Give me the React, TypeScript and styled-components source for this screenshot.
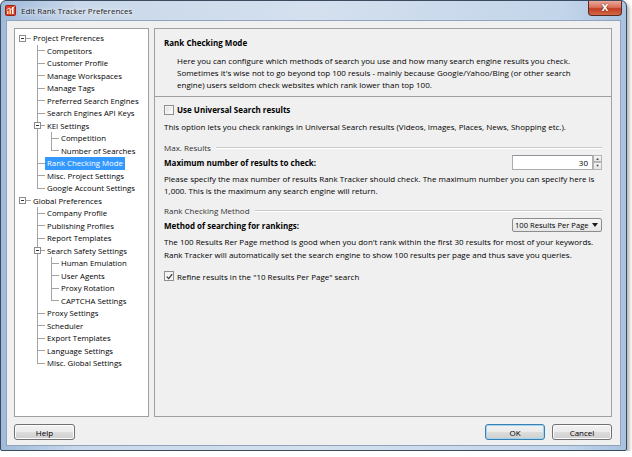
import React from "react";
import styled, { createGlobalStyle } from "styled-components";

const GlobalStyle = createGlobalStyle`
  html, body {
    margin: 0;
    padding: 0;
    background: #ffffff;
  }
  body {
    font-family: "Open Sans", "Noto Sans", sans-serif;
    font-size: 8px;
    color: #000;
  }
  * {
    box-sizing: border-box;
  }
`;

const LINE = "#a3a3a3";

const Window = styled.div`
  width: 627px;
  height: 451px;
  display: flex;
  flex-direction: column;
  border: 1px solid #3b4b5f;
  border-radius: 6px 6px 2px 2px;
  background: linear-gradient(90deg, #9fbadb 0%, #c9d8ea 12%, #d4e0ee 50%, #c3d5ea 90%, #a9c2e0 100%);
  box-shadow: 2px 3px 4px rgb(0 0 0 / 0.35);
  overflow: hidden;
`;

const TitleBar = styled.div`
  height: 19px;
  display: flex;
  align-items: center;
  padding: 0 4px 0 4px;
  gap: 5px;
`;

const TitleText = styled.span`
  font-size: 8px;
  color: #1a1a1a;
  text-shadow: 0 0 6px #ffffff, 0 0 3px #ffffff;
  flex: 1;
`;

const CloseButton = styled.div`
  width: 34px;
  height: 15px;
  margin-top: -4px;
  border: 1px solid #5a2a22;
  border-top: none;
  border-radius: 0 0 4px 4px;
  background: linear-gradient(#e9a89a 0%, #d9715c 45%, #c13d24 55%, #d56a45 100%);
  display: flex;
  align-items: center;
  justify-content: center;
  color: #ffffff;
  font-family: "DejaVu Sans", sans-serif;
  font-weight: bold;
  font-size: 9px;
  text-shadow: 0 0 2px #5a1a10;
`;

const Client = styled.div`
  flex: 1;
  margin: 0 5px 4px 5px;
  border: 1px solid #8fa3bb;
  background: #f0f0f0;
  padding: 7px 8px 5px 7px;
  display: flex;
  flex-direction: column;
  gap: 7px;
`;

const Main = styled.div`
  flex: 1;
  display: flex;
  gap: 5px;
  min-height: 0;
`;

const TreeBox = styled.div`
  width: 135px;
  flex-shrink: 0;
  background: #ffffff;
  border: 1px solid #a0a0a0;
  padding-top: 3px;
  overflow: hidden;
  font-size: 7.8px;
`;

const Row = styled.div`
  height: 12.5px;
  display: flex;
  align-items: stretch;
  white-space: nowrap;
`;

const HandleCell = styled.div<{ $line: boolean }>`
  width: 16px;
  flex-shrink: 0;
  display: flex;
  align-items: center;
  padding-left: 4px;
  background: ${(p) =>
    p.$line ? `linear-gradient(${LINE}, ${LINE}) no-repeat 8px 50% / 8px 1px` : "none"};
`;

const Guide = styled.div<{ $kind: "pipe" | "tee" | "ell" | "none" }>`
  width: 14px;
  flex-shrink: 0;
  display: flex;
  align-items: center;
  padding-left: 3px;
  background: ${({ $kind }) => {
    const g = `linear-gradient(${LINE}, ${LINE}) no-repeat`;
    if ($kind === "pipe") return `${g} 6px 0 / 1px 100%`;
    if ($kind === "tee") return `${g} 6px 0 / 1px 100%, ${g} 6px 50% / 8px 1px`;
    if ($kind === "ell") return `${g} 6px 0 / 1px 50%, ${g} 6px 50% / 8px 1px`;
    return "none";
  }};
`;

const Expander = styled.span`
  width: 7px;
  height: 7px;
  flex-shrink: 0;
  border: 1px solid #8c8c8c;
  background: #ffffff linear-gradient(#333, #333) no-repeat 50% 50% / 3px 1px;
`;

const NodeLabel = styled.span<{ $selected?: boolean }>`
  padding: 0 2px;
  line-height: 12.5px;
  background: ${(p) => (p.$selected ? "#3399ff" : "transparent")};
  color: ${(p) => (p.$selected ? "#ffffff" : "#000000")};
`;

const Panel = styled.div`
  flex: 1;
  min-width: 0;
  border: 1px solid #a0a0a0;
  background: #f0f0f0;
  display: flex;
  flex-direction: column;
  overflow: hidden;
`;

const Header = styled.div`
  padding: 8px 9px 5px 9px;
  border-bottom: 1px solid #a0a0a0;
`;

const HeaderTitle = styled.div`
  font-weight: bold;
  line-height: 12.5px;
`;

const HeaderText = styled.div`
  margin: 5px 0 0 13px;
  line-height: 12px;
  white-space: nowrap;
`;

const Body = styled.div`
  padding: 7px 9px 0 9px;
  display: flex;
  flex-direction: column;
`;

const CheckRow = styled.label<{ $top?: number }>`
  display: flex;
  align-items: center;
  gap: 3px;
  height: 12px;
  margin-top: ${(p) => p.$top ?? 0}px;
  white-space: nowrap;
`;

const CheckBox = styled.span<{ $checked?: boolean }>`
  width: 10px;
  height: 10px;
  flex-shrink: 0;
  border: 1px solid #8e8f8f;
  background: ${(p) =>
    p.$checked
      ? "#f4f4f4"
      : "linear-gradient(135deg, #dcdcdc 0%, #f6f6f6 70%, #ffffff 100%)"};
  box-shadow: inset 0 0 0 1px #f4f4f4;
  display: flex;
  align-items: center;
  justify-content: center;
`;

const BoldLabel = styled.span`
  font-weight: bold;
  white-space: nowrap;
`;

const Note = styled.div<{ $top: number }>`
  margin-top: ${(p) => p.$top}px;
  line-height: 12.5px;
  white-space: nowrap;
`;

const GroupTitle = styled.div<{ $top: number }>`
  margin-top: ${(p) => p.$top}px;
  height: 12.5px;
  display: flex;
  align-items: center;
  gap: 5px;
  color: #333333;
  white-space: nowrap;

  &::after {
    content: "";
    flex: 1;
    height: 1px;
    background: #c9c9c9;
    box-shadow: 0 1px 0 #ffffff;
  }
`;

const FieldRow = styled.div<{ $top: number }>`
  margin-top: ${(p) => p.$top}px;
  display: flex;
  align-items: center;
  justify-content: space-between;
`;

const Spinner = styled.div`
  display: flex;
  height: 15px;
`;

const SpinInput = styled.div`
  width: 81px;
  border: 1px solid #abadb3;
  border-top-color: #8f9399;
  background: #ffffff;
  text-align: right;
  padding-right: 4px;
  line-height: 13px;
`;

const SpinButtons = styled.div`
  width: 9px;
  display: flex;
  flex-direction: column;
`;

const SpinButton = styled.div`
  flex: 1;
  border: 1px solid #b5b5b5;
  background: linear-gradient(#f7f7f7, #e4e4e4);
  display: flex;
  align-items: center;
  justify-content: center;
  font-size: 4px;
  color: #444;
`;

const SelectBox = styled.div`
  width: 90px;
  height: 14px;
  border: 1px solid #8c8c8c;
  border-radius: 2px;
  background: linear-gradient(#f5f5f5, #e6e6e6);
  display: flex;
  align-items: center;
  justify-content: space-between;
  padding: 0 3px 0 2px;
  white-space: nowrap;
  font-size: 7.6px;
`;

const Caret = styled.span`
  width: 0;
  height: 0;
  flex-shrink: 0;
  border-left: 3px solid transparent;
  border-right: 3px solid transparent;
  border-top: 4px solid #1a1a1a;
`;

const ButtonBar = styled.div`
  display: flex;
  align-items: center;
  gap: 7px;
  height: 16px;
`;

const Spacer = styled.div`
  flex: 1;
`;

const Button = styled.button<{ $width: number; $default?: boolean }>`
  width: ${(p) => p.$width}px;
  height: 16px;
  padding: 0;
  font-family: inherit;
  font-size: 8px;
  color: #000;
  border: 1px solid ${(p) => (p.$default ? "#3c7fb1" : "#707070")};
  border-radius: 3px;
  background: linear-gradient(#f2f2f2 0%, #ebebeb 50%, #dddddd 51%, #cfcfcf 100%);
  box-shadow: inset 0 0 0 1px ${(p) => (p.$default ? "#9fd5f0" : "#fcfcfc")};
  cursor: pointer;
`;

type TreeNode = { label: string; level: number; open?: boolean; selected?: boolean };

const tree: TreeNode[] = [
  { label: "Project Preferences", level: 0, open: true },
  { label: "Competitors", level: 1 },
  { label: "Customer Profile", level: 1 },
  { label: "Manage Workspaces", level: 1 },
  { label: "Manage Tags", level: 1 },
  { label: "Preferred Search Engines", level: 1 },
  { label: "Search Engines API Keys", level: 1 },
  { label: "KEI Settings", level: 1, open: true },
  { label: "Competition", level: 2 },
  { label: "Number of Searches", level: 2 },
  { label: "Rank Checking Mode", level: 1, selected: true },
  { label: "Misc. Project Settings", level: 1 },
  { label: "Google Account Settings", level: 1 },
  { label: "Global Preferences", level: 0, open: true },
  { label: "Company Profile", level: 1 },
  { label: "Publishing Profiles", level: 1 },
  { label: "Report Templates", level: 1 },
  { label: "Search Safety Settings", level: 1, open: true },
  { label: "Human Emulation", level: 2 },
  { label: "User Agents", level: 2 },
  { label: "Proxy Rotation", level: 2 },
  { label: "CAPTCHA Settings", level: 2 },
  { label: "Proxy Settings", level: 1 },
  { label: "Scheduler", level: 1 },
  { label: "Export Templates", level: 1 },
  { label: "Language Settings", level: 1 },
  { label: "Misc. Global Settings", level: 1 },
];

// true when another node of the same level follows before the branch closes
const hasNextSibling = (i: number) => {
  const lvl = tree[i].level;
  for (let j = i + 1; j < tree.length; j++) {
    if (tree[j].level < lvl) return false;
    if (tree[j].level === lvl) return true;
  }
  return false;
};

const ancestorAt = (i: number, lvl: number) => {
  for (let j = i - 1; j >= 0; j--) if (tree[j].level === lvl) return j;
  return -1;
};

const AppIcon = () => (
  <svg width="11" height="11" viewBox="0 0 11 11">
    <rect x="0.5" y="0.5" width="10" height="10" rx="1" fill="#d9412b" stroke="#9b2415" />
    <rect x="2" y="6" width="1.5" height="3" fill="#ffe0a0" />
    <rect x="4.5" y="4" width="1.5" height="5" fill="#ffe0a0" />
    <rect x="7" y="2" width="1.5" height="7" fill="#ffffff" />
    <path d="M1.5 5 L4 3 L6 4.5 L9.5 1.5" stroke="#ffffff" strokeWidth="0.8" fill="none" />
  </svg>
);

const Tick = () => (
  <svg width="7" height="7" viewBox="0 0 7 7">
    <path d="M0.8 3.6 L2.7 5.6 L6.2 1.2" stroke="#3a3a3a" strokeWidth="1.3" fill="none" />
  </svg>
);

export default function App() {
  return (
    <>
      <GlobalStyle />
      <Window>
        <TitleBar>
          <AppIcon />
          <TitleText>Edit Rank Tracker Preferences</TitleText>
          <CloseButton>X</CloseButton>
        </TitleBar>
        <Client>
          <Main>
            <TreeBox>
              {tree.map((node, i) => (
                <Row key={node.label}>
                  {node.level === 0 ? (
                    <HandleCell $line>
                      <Expander />
                    </HandleCell>
                  ) : (
                    <HandleCell $line={false} />
                  )}
                  {Array.from({ length: node.level }, (_, k) => {
                    const lvl = k + 1;
                    if (lvl === node.level) {
                      return (
                        <Guide key={lvl} $kind={hasNextSibling(i) ? "tee" : "ell"}>
                          {node.open && <Expander />}
                        </Guide>
                      );
                    }
                    const a = ancestorAt(i, lvl);
                    return <Guide key={lvl} $kind={a >= 0 && hasNextSibling(a) ? "pipe" : "none"} />;
                  })}
                  <NodeLabel $selected={node.selected}>{node.label}</NodeLabel>
                </Row>
              ))}
            </TreeBox>
            <Panel>
              <Header>
                <HeaderTitle>Rank Checking Mode</HeaderTitle>
                <HeaderText>
                  Here you can configure which methods of search you use and how many search engine results you check.
                  <br />
                  Sometimes it's wise not to go beyond top 100 resuls - mainly because Google/Yahoo/Bing (or other search
                  <br />
                  engine) users seldom check websites which rank lower than top 100.
                </HeaderText>
              </Header>
              <Body>
                <CheckRow>
                  <CheckBox />
                  <BoldLabel>Use Universal Search results</BoldLabel>
                </CheckRow>
                <Note $top={5}>
                  This option lets you check rankings in Universal Search results (Videos, Images, Places, News, Shopping etc.).
                </Note>
                <GroupTitle $top={8}>Max. Results</GroupTitle>
                <FieldRow $top={1}>
                  <BoldLabel>Maximum number of results to check:</BoldLabel>
                  <Spinner>
                    <SpinInput>30</SpinInput>
                    <SpinButtons>
                      <SpinButton>▲</SpinButton>
                      <SpinButton>▼</SpinButton>
                    </SpinButtons>
                  </Spinner>
                </FieldRow>
                <Note $top={3}>
                  Please specify the max number of results Rank Tracker should check. The maximum number you can specify here is
                  <br />
                  1,000. This is the maximum any search engine will return.
                </Note>
                <GroupTitle $top={7}>Rank Checking Method</GroupTitle>
                <FieldRow $top={1}>
                  <BoldLabel>Method of searching for rankings:</BoldLabel>
                  <SelectBox>
                    100 Results Per Page
                    <Caret />
                  </SelectBox>
                </FieldRow>
                <Note $top={4}>
                  The 100 Results Rer Page method is good when you don't rank within the first 30 results for most of your keywords.
                  <br />
                  Rank Tracker will automatically set the search engine to show 100 results per page and thus save you queries.
                </Note>
                <CheckRow $top={9}>
                  <CheckBox $checked>
                    <Tick />
                  </CheckBox>
                  Refine results in the "10 Results Per Page" search
                </CheckRow>
              </Body>
            </Panel>
          </Main>
          <ButtonBar>
            <Button $width={61}>Help</Button>
            <Spacer />
            <Button $width={60} $default>
              OK
            </Button>
            <Button $width={60}>Cancel</Button>
          </ButtonBar>
        </Client>
      </Window>
    </>
  );
}
